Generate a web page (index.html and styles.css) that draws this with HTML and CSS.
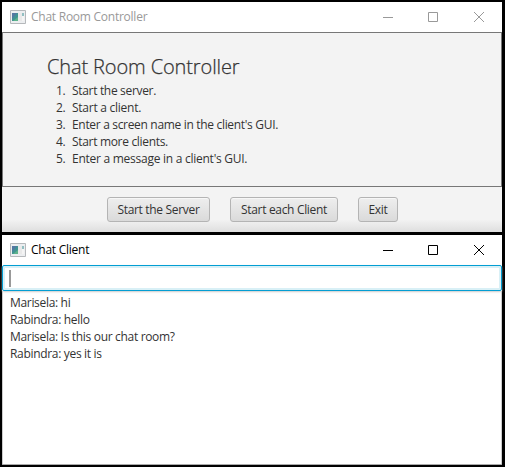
FILE: index.html
```html
<!DOCTYPE html>
<html lang="en">
<head>
<meta charset="utf-8">
<title>Chat Room Controller</title>
<link rel="stylesheet" href="styles.css">
</head>
<body>
<section class="window controller">
  <header class="titlebar inactive">
    <svg class="app-icon" width="16" height="14" viewBox="0 0 16 14"><path d="M.5.5h15v13H.5z" fill="#eceef0" stroke="#b5b8bb"/><path d="M2 3h6v8H2z" fill="#419392"/><path d="M2 3h5L2 9z" fill="#5379a2"/><path d="M3 11l5-4v4z" fill="#5db38b"/><path d="M8 3h4v8H8z" fill="#e9e9e9"/><path d="M12 3h2v3h-2z" fill="#91bfc2"/><path d="M12 6h2v5h-2z" fill="#f4f4f4"/></svg>
    <h1>Chat Room Controller</h1>
    <svg class="controls" width="102" height="12" viewBox="0 0 102 12"><path d="M0 6.5h10M45.5 1.5h9v9h-9z"/><path d="M91 1l10 10M101 1L91 11"/></svg>
  </header>
  <main class="instructions">
    <h2>Chat Room Controller</h2>
    <ol>
      <li>Start the server.</li>
      <li class="loose">Start a client.</li>
      <li>Enter a screen name in the client's GUI.</li>
      <li>Start more clients.</li>
      <li class="loose">Enter a message in a client's GUI.</li>
    </ol>
  </main>
  <footer class="actions">
    <button>Start the Server</button>
    <button class="each">Start each Client</button>
    <button class="exit">Exit</button>
  </footer>
</section>
<section class="window client">
  <header class="titlebar">
    <svg class="app-icon" width="16" height="14" viewBox="0 0 16 14"><path d="M.5.5h15v13H.5z" fill="#eceef0" stroke="#b5b8bb"/><path d="M2 3h6v8H2z" fill="#419392"/><path d="M2 3h5L2 9z" fill="#5379a2"/><path d="M3 11l5-4v4z" fill="#5db38b"/><path d="M8 3h4v8H8z" fill="#e9e9e9"/><path d="M12 3h2v3h-2z" fill="#91bfc2"/><path d="M12 6h2v5h-2z" fill="#f4f4f4"/></svg>
    <h1>Chat Client</h1>
    <svg class="controls" width="102" height="12" viewBox="0 0 102 12"><path d="M0 6.5h10M45.5 1.5h9v9h-9z"/><path d="M91 1l10 10M101 1L91 11"/></svg>
  </header>
  <div class="message-field"><span class="caret"></span></div>
  <div class="messages">
    <p>Marisela: hi</p>
    <p>Rabindra: hello</p>
    <p>Marisela: Is this our chat room?</p>
    <p>Rabindra: yes it is</p>
  </div>
</section>
</body>
</html>
```
FILE: styles.css
```css
* { box-sizing: border-box; }
body { margin: 0; width: 505px; height: 467px; padding: 2px 3px 2px 2px; overflow: hidden; background: #000; color: #333; font: 12px/17px "Open Sans", sans-serif; letter-spacing: -.32px; }
h1, h2, p, ol { margin: 0; font-weight: 400; }
.window { width: 500px; display: flex; flex-direction: column; }
.controller { height: 230px; background: #f3f3f3; margin-bottom: 3px; }
.client { height: 230px; background: #fff; border-bottom: 1px solid #aaa; }
.titlebar { height: 30px; flex: none; display: flex; align-items: center; padding: 0 17px 0 8px; background: #fff; color: #000; }
.titlebar h1 { font-size: 12px; letter-spacing: -.25px; margin-left: 5px; padding-bottom: 2px; }
.controls { margin-left: auto; fill: none; stroke: #000; }
.inactive { color: #999; }
.inactive .controls { stroke: #999; }
.instructions { height: 155px; border: 1px solid #777; padding: 19px 0 0 44px; }
.instructions h2 { font-size: 20px; line-height: 30px; font-weight: 300; letter-spacing: -.12px; -webkit-text-stroke: .25px #333; }
.instructions ol { padding: 0 0 0 9px; list-style: none; counter-reset: step; }
.instructions li { display: flex; counter-increment: step; }
.instructions li::before { content: counter(step) "."; width: 16px; }
.instructions .loose { letter-spacing: -.26px; }
.actions { flex: 1; display: flex; gap: 20px; padding: 10px 0 0 105px; background: linear-gradient(#f3f3f3 72%, #dedede); }
button { width: 103px; height: 25px; padding: 0; font: inherit; letter-spacing: inherit; color: #333; border: 1px solid #b4b4b4; border-radius: 3px; background: linear-gradient(#eee, #dadada); box-shadow: inset 0 1px #f7f7f7; }
.each { width: 108px; }
.exit { width: 40px; }
.message-field { height: 26px; flex: none; border: 1px solid #039ed3; border-radius: 2px; box-shadow: inset 0 0 0 2px #d9f0f6, 0 1px 2px #ccc; padding: 4px 0 0 6px; }
.caret { display: block; width: 2px; height: 17px; background: #999; }
.messages { flex: 1; padding: 3px 7px; border: 1px solid #ccc; border-top: 0; border-bottom: 0; }
```
